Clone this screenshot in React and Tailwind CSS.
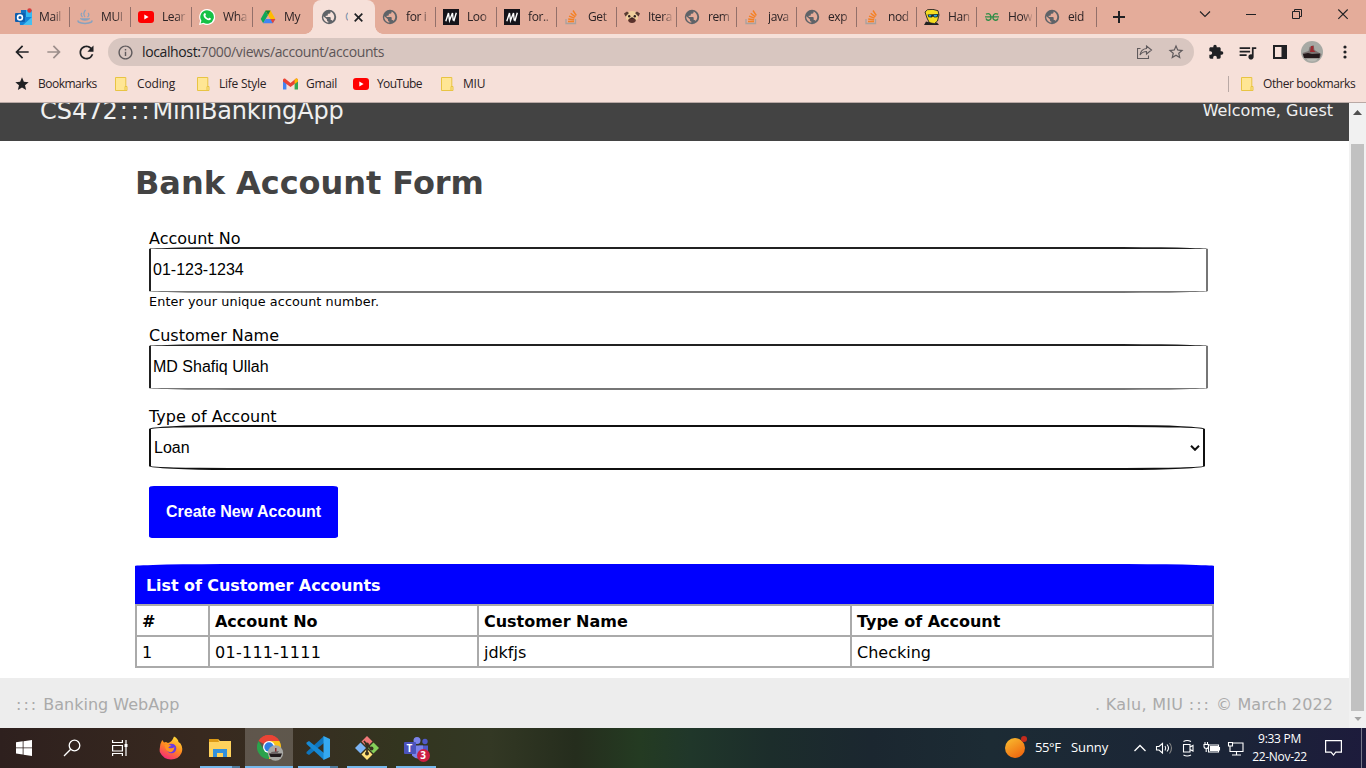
import React from "react";
import { MdExtension, MdQueueMusic, MdStarBorder, MdStar, MdRefresh, MdArrowBack, MdArrowForward, MdInfoOutline } from "react-icons/md";

const Globe = () => (
  <svg viewBox="0 0 16 16" className="mr-px h-4 w-4 shrink-0" fill="#5f6368" fillRule="evenodd">
    <path d="M8 .8a7.200 7.200 0 1 1 0 14.400A7.200 7.200 0 0 1 8 .8zM9.600 2.500v.8q0 1.400-1.400 1.400H6.800V6q0 .8-.8.8H4.700v1.300h4.200q.8 0 .8.800v2h.6q1 0 1.300 1A5.800 5.800 0 0 0 9.600 2.500zM2.300 7.200A5.800 5.800 0 0 0 7.300 13.700v-1.300q-1.400 0-1.400-1.500v-.6z" />
  </svg>
);

const Outlook = () => (
  <svg viewBox="0 0 18 18" className="h-[18px] w-[18px]">
    <rect x="6" y="2" width="11" height="9" fill="#35b8f1" />
    <rect x="6" y="2" width="5" height="8" fill="#1272c4" />
    <path d="M4 9h13v8H5z" fill="#1684d8" />
    <path d="M17 9v8H8z" fill="#44c0f2" />
    <rect x="0" y="5" width="10" height="9" rx="1" fill="#0f5fae" />
    <circle cx="5" cy="9.5" r="2.4" fill="none" stroke="#fff" strokeWidth="1.6" />
    <circle cx="14.5" cy="2.5" r="2.2" fill="#d63c3c" />
  </svg>
);
const Fountain = () => (
  <svg viewBox="0 0 16 16" className="h-4 w-4" fill="none" stroke="#87a2bf">
    <path d="M5.500 8Q3 5.500 5 4M8 8Q5.500 4.500 8.500 1M10.500 8Q13 6 11 4" strokeWidth="1.200" />
    <path d="M3 9.500h10q-1.500 2-5 2t-5-2z" fill="#87a2bf" strokeWidth=".5" />
    <path d="M1.500 11.500q-2 2 6.500 3 8.500-1 6.500-3" strokeWidth="1.600" />
  </svg>
);
const YouTube = () => (
  <svg viewBox="0 0 16 12" className="h-3 w-4">
    <rect width="16" height="12" rx="3" fill="#f00" />
    <path d="M6.300 3.500v5L10.600 6z" fill="#fff" />
  </svg>
);
const WhatsApp = () => (
  <svg viewBox="0 0 16 16" className="h-4 w-4">
    <path d="M8 0a8 8 0 1 1-3.700 15L0 16l1.100-4.200A8 8 0 0 1 8 0z" fill="#fff" />
    <path d="M8 1.200a6.800 6.800 0 1 1-3.500 12.600l-2.900.7.8-2.800A6.800 6.800 0 0 1 8 1.200z" fill="#14c145" />
    <path d="M5.400 4.300c.7-.5 1.100 0 1.500 1.300.2.500-.7.900-.5 1.300.7 1.300 1.500 2 2.800 2.600.5.200.8-1 1.400-.8 1.500.6 1.600.8 1.200 1.600-.9 1.600-3 1.200-4.900-.2C4.800 8.400 3.500 5.900 5.400 4.300z" fill="#fff" />
  </svg>
);
const Drive = () => (
  <svg viewBox="0 0 16 16" className="h-4 w-4">
    <path d="M5.500 1.500 8 6 3.200 14.300 0.700 10z" fill="#0fa857" />
    <path d="M5.500 1.500h5L15.300 10h-5z" fill="#ffbb00" />
    <path d="M5.500 1.500h5L8 6z" fill="#188038" />
    <path d="M5.600 10h9.700l-2.500 4.300H3.200z" fill="#4285f4" />
    <path d="M15.300 10h-5l2.500 4.300z" fill="#ea4335" />
  </svg>
);
const Mdn = () => (
  <svg viewBox="0 0 16 16" className="h-4 w-4">
    <rect width="16" height="16" fill="#15141a" />
    <path d="M2.800 12.300 5.500 4l1 7.500L9.500 4l.7 7.500M13.300 3.700l-2.500 8.600" fill="none" stroke="#fff" strokeWidth="1.400" />
  </svg>
);
const Stack = () => (
  <svg viewBox="0 0 16 16" className="h-4 w-4" fill="none">
    <path d="M2 10v4.500h9.500V10" stroke="#aaa19d" strokeWidth="1.300" />
    <path d="M4 12.500h6M4.200 10l5.900.800M5 7.200l5.500 2M6.700 4.300l4.700 3.600M9 1.500l3.300 5" stroke="#f48024" strokeWidth="1.400" />
  </svg>
);
const Pug = () => (
  <svg viewBox="0 0 16 16" className="h-4 w-4">
    <path d="M2.500 3.500q5.500-3 11 0L14 10q-6 5-12 0z" fill="#f0cf9c" />
    <path d="M0 4.500 3 2.500 5 4 1.500 7.500zM16 4.500 13 2.500 11 4l3.500 3.500z" fill="#5a3d33" />
    <path d="M6 9h4l2 2q-.5 3-4 3t-4-3z" fill="#5a312b" />
    <circle cx="5.200" cy="7.300" r="1.200" fill="#302221" /><circle cx="10.800" cy="7.300" r="1.200" fill="#302221" />
    <path d="M6.500 8.500h3L8 10z" fill="#1e1414" />
  </svg>
);
const Cartoon = () => (
  <svg viewBox="0 0 16 16" className="h-4 w-4">
    <path d="M1 3 3.500.7 9 .4l5 1.300 1 4.300-1.500 6-3 2.500-5-.5L3 9z" fill="#f5dc20" stroke="#222" strokeWidth=".9" />
    <path d="M3.500 5.500 14.800 5l-1.300 3.200-3 .3-1.500-1-1.500 1-3-.3z" fill="#15222b" />
    <path d="M4.500 6l3 .2-.8 1.300H5.200zM9.500 6l4-.3-1 1.800-2 .2z" fill="#25a9e8" />
    <path d="M0 16l2-3.500 4 1 4 1.200 3-1.200 2 2.500z" fill="#222" />
  </svg>
);
const Geeks = () => (
  <svg viewBox="0 0 16 16" className="h-4 w-4" fill="none" stroke="#2f8d46" strokeWidth="1.300">
    <path d="M2 5.200c3.500-1.500 4.800.5 4.800 2.600A2.500 2.500 0 0 1 2 9.500M1 7.800h14M14 5.200c-3.500-1.500-4.800.5-4.800 2.600A2.500 2.500 0 0 0 14 9.500" />
  </svg>
);
const Folder = () => (
  <svg viewBox="0 0 13 15" className="h-[15px] w-[13px] shrink-0" fill="#ffe694" stroke="#e8c443">
    <path d="M.5.5h10.300v13H.5z" />
    <path d="M10 9.500h2v4h-2z" />
  </svg>
);
const Gmail = () => (
  <svg viewBox="0 0 15 12" className="h-3 w-[15px]">
    <path d="M0 2v9.500h3.400V5z" fill="#4285f4" />
    <path d="M15 2v9.500h-3.400V5z" fill="#34a853" />
    <path d="M0 2q0-2 2-1.500L7.500 5 13 .5q2-.5 2 1.500v1.500L7.500 9 0 3.500z" fill="#ea4335" />
    <path d="M11.600 1.800 13 .6q2-.5 2 1.400v1.600l-3.400 2.500z" fill="#fbbc04" />
  </svg>
);

const tabs = [
  { icon: Outlook, label: "Mail", w: "w-[70px] pl-[15px]" },
  { icon: Fountain, label: "MUI", w: "w-[61px] pl-[7px]" },
  { icon: YouTube, label: "Lear", w: "w-[61px] pl-[7px]" },
  { icon: WhatsApp, label: "Wha", w: "w-[61px] pl-[7px]" },
  { icon: Drive, label: "My", w: "w-[60px] pl-[7px]", bare: true },
  { active: true },
  { icon: Globe, label: "for i", w: "w-[61px] pl-[7px]" },
  { icon: Mdn, label: "Loo", w: "w-[61px] pl-[7px]" },
  { icon: Mdn, label: "for..", w: "w-[60px] pl-[7px]" },
  { icon: Stack, label: "Get", w: "w-[60px] pl-[7px]" },
  { icon: Pug, label: "Itera", w: "w-[60px] pl-[7px]" },
  { icon: Globe, label: "rem", w: "w-[60px] pl-[7px]" },
  { icon: Stack, label: "java", w: "w-[60px] pl-[7px]" },
  { icon: Globe, label: "exp", w: "w-[60px] pl-[7px]" },
  { icon: Stack, label: "nod", w: "w-[60px] pl-[7px]" },
  { icon: Cartoon, label: "Han", w: "w-[60px] pl-[7px]" },
  { icon: Geeks, label: "How", w: "w-[60px] pl-[7px]" },
  { icon: Globe, label: "eid", w: "w-[60px] pl-[7px]" },
];

function Tab({ icon: Icon, label, w, bare, active }) {
  if (active)
    return (
      <div className="relative flex h-full w-[62px] items-center rounded-t-lg bg-[#f6e0d9] pl-2">
        <span className="absolute bottom-0 -left-2 h-2 w-2 bg-[radial-gradient(circle_at_0_0,transparent_7.5px,#f6e0d9_8px)]" />
        <span className="absolute -right-2 bottom-0 h-2 w-2 bg-[radial-gradient(circle_at_100%_0,transparent_7.5px,#f6e0d9_8px)]" />
        <Globe />
        <span className="ml-[7px] w-[3px] overflow-hidden text-[#7b92ad]">C</span>
        <svg viewBox="0 0 9 9" className="ml-[6px] h-[9px] w-[9px]" stroke="#202124" strokeWidth="1.700"><path d="M.7.7l7.600 7.600M8.300.7.7 8.300" /></svg>
      </div>
    );
  return (
    <div className={`flex h-full shrink-0 items-center ${w}`}>
      <span className="flex w-6 shrink-0 items-center"><Icon /></span>
      <span className="w-[24px] overflow-hidden tracking-[-0.4px] whitespace-nowrap [mask-image:linear-gradient(to_right,#000_60%,rgba(0,0,0,0.15))]">{label}</span>
      {!bare && <span className="ml-auto h-5 w-px bg-[#93706a]" />}
    </div>
  );
}

function Browser() {
  return (
    <div className="text-[12px] text-[#2b2224] [font-family:'Open_Sans','Noto_Sans',sans-serif]">
      <div className="flex h-[34px] bg-[#e4ac9a]">
        {tabs.map((t, i) => <Tab key={i} {...t} />)}
        <svg viewBox="0 0 269 34" className="h-[34px] w-[269px]" fill="none" stroke="#202124">
          <path d="M22 11v12M16 17h12" strokeWidth="2" />
          <path d="M103 11.500l5 5 5-5" strokeWidth="1.100" />
          <path d="M149 14.500h10" />
          <path d="M195.500 11.500h7v7h-7zM197.500 11.500v-2h7v7h-2" />
          <path d="M241.300 9.500l9.400 9.400M250.700 9.500l-9.400 9.400" strokeWidth="1.100" />
        </svg>
      </div>
      <div className="flex h-[36px] items-center bg-[#f6e0d9] pl-3">
        <MdArrowBack className="h-5 w-5 text-[#202124]" />
        <MdArrowForward className="ml-3 h-5 w-5 text-[#9c8e8b]" />
        <MdRefresh className="ml-3 h-[21px] w-[21px] text-[#202124]" />
        <div className="ml-[11px] flex h-7 w-[1086px] items-center rounded-full bg-[#d8c6c0] pl-[9px] text-[14px] text-[#5d5557]">
          <MdInfoOutline className="h-[17px] w-[17px] text-[#5f5a5c]" />
          <span className="ml-2 pb-px tracking-[-0.375px]"><span className="text-[#202124]">localhost:</span>7000/views/account/accounts</span>
          <svg viewBox="0 0 16 14" className="ml-auto h-[14px] w-4" fill="none" stroke="#5f5a5c" strokeWidth="1.100">
            <path d="M3.500 3.500h-3v10h11v-3" /><path d="M9.500 1l5 4-5 4V6.500Q5.500 6.500 3 10 4 4 9.500 3.500z" />
          </svg>
          <MdStarBorder className="mr-[9px] ml-[14px] h-[18px] w-[18px] text-[#5f5a5c]" />
        </div>
        <MdExtension className="ml-[14px] h-4 w-4 text-[#202124]" />
        <MdQueueMusic className="ml-[13px] h-[21px] w-[21px] text-[#202124]" />
        <svg viewBox="0 0 14 14" className="ml-[15px] h-[14px] w-[14px]"><path d="M0 0h14v14H0zM2 2v10h6.500V2z" fill="#202124" fillRule="evenodd" /></svg>
        <svg viewBox="0 0 22 22" className="ml-[14px] h-[22px] w-[22px]">
          <circle cx="11" cy="11" r="11" fill="#a7a9a4" />
          <path d="M1.500 12l6-2 1-4 4-2 1 5 5 3 2 1q-1 5-5 6H6q-4-2-4.500-7z" fill="#7b7271" />
          <path d="M10 5h2.500v4l2 2H9z" fill="#9c2b30" />
          <path d="M2 13l5-1 4 1 8-.5-.5 4.500H3z" fill="#25191b" />
          <path d="M4 17.500h14q-7 6-14 0z" fill="#b9bab4" />
        </svg>
        <svg viewBox="0 0 4 14" className="ml-5 h-[14px] w-1" fill="#202124"><circle cx="2" cy="2" r="1.600" /><circle cx="2" cy="7" r="1.600" /><circle cx="2" cy="12" r="1.600" /></svg>
      </div>
      <div className="flex h-[33px] items-center border-b border-[#b9a9a5] bg-[#f6e0d9] pb-1 pl-[14px]">
        <MdStar className="h-4 w-4 text-[#202124]" />
        <span className="ml-2 w-[77px] tracking-[-0.5px]">Bookmarks</span>
        <Folder /><span className="ml-[9px] w-[60px] tracking-[-0.15px]">Coding</span>
        <Folder /><span className="ml-[9px] w-16 tracking-[-0.25px] whitespace-nowrap">Life Style</span>
        <Gmail /><span className="ml-2 w-[47px] tracking-[-0.3px]">Gmail</span>
        <YouTube /><span className="ml-2 w-16 tracking-[-0.65px]">YouTube</span>
        <Folder /><span className="ml-[9px] tracking-[-0.2px]">MIU</span>
        <span className="ml-auto h-4 w-px bg-[#b9a9a5]" />
        <span className="ml-3"><Folder /></span>
        <span className="mr-[10px] ml-[9px] w-[93px] tracking-[-0.42px] whitespace-nowrap">Other bookmarks</span>
      </div>
    </div>
  );
}

const rows = [
  ["#", "Account No", "Customer Name", "Type of Account"],
  ["1", "01-111-1111", "jdkfjs", "Checking"],
];
const inputStyle =
  "flex h-[46px] w-[1059px] items-center rounded-[106px/2px] border-2 border-t-[#212121] border-r-[#767676] border-b-[#767676] border-l-[#212121] pl-[2px] [font-family:'Liberation_Sans',sans-serif]";

function Page() {
  return (
    <div className="flex h-[625px] bg-white text-[16px] text-black [font-family:'DejaVu_Sans',sans-serif]">
      <div className="flex w-[1349px] flex-col">
        <header className="flex h-[38px] justify-between overflow-hidden bg-[#434343] pr-4 pl-10 text-[#f0f0f0]">
          <span className="-mt-[6px] text-[24px] leading-[28px]">CS472<span className="ml-[2px] tracking-[2.800px]">:::</span><span className="tracking-[-0.180px]">MiniBankingApp</span></span>
          <span className="-mt-[2px] leading-[19px]">Welcome, Guest</span>
        </header>
        <main className="flex h-[537px] w-[1214px] flex-col pl-[135px]">
          <h1 className="h-[88px] text-[32px] leading-[84px] font-bold tracking-[-0.040px] text-[#434343]">Bank Account Form</h1>
          <div className="flex flex-col pl-[14px]">
            <label className="h-[18px] leading-[19px]">Account No</label>
            <div className={inputStyle}>01-123-1234</div>
            <small className="h-[33px] text-[12.800px] leading-[18px] tracking-[0.090px]">Enter your unique account number.</small>
            <label className="h-[18px] leading-[19px]">Customer Name</label>
            <div className={inputStyle}>MD Shafiq Ullah</div>
            <label className="mt-[17px] h-[18px] leading-[19px] tracking-[0.050px]">Type of Account</label>
            <div className="flex h-[45px] w-[1056px] items-center justify-between rounded-[80px/4px] border-2 border-[#101010] pr-[3px] pl-[3px] [font-family:'Liberation_Sans',sans-serif]">
              Loan
              <svg viewBox="0 0 10 6" className="h-[6px] w-[10px]" fill="none" stroke="#101010" strokeWidth="2"><path d="M1 .8l4 4 4-4" /></svg>
            </div>
            <div className="mt-4 flex h-[52px] w-[189px] items-center justify-center rounded-[5px/2px] bg-[#0000ff] font-bold text-white [font-family:'Liberation_Sans',sans-serif]">Create New Account</div>
          </div>
          <div className="mt-[26px] h-10 rounded-tl-[108px_2px] rounded-tr-[108px_2px] bg-[#0000ff] pl-[11px] leading-[44px] font-bold tracking-[-0.080px] text-white">List of Customer Accounts</div>
          <div className="grid grid-cols-[71px_267px_371px_360px] gap-[2px] border-2 border-[#aaa] bg-[#aaa]">
            {rows.map((r, i) => r.map((c) => (
              <span key={c} className={`h-[29px] bg-white pl-[5px] leading-[32px] ${i ? (c.includes("-") ? "tracking-[0.270px]" : "") : "font-bold tracking-[-0.020px]"}`}>{c}</span>
            )))}
          </div>
        </main>
        <footer className="flex h-[50px] justify-between bg-[#ededed] px-4 leading-[54px] text-[#aaa]">
          <span><span className="tracking-[2px]">:::</span> Banking WebApp</span>
          <span><span className="tracking-[0.300px]">. Kalu, MIU </span><span className="tracking-[2px]">:::</span><span className="tracking-[0.100px]"> © March 2022</span></span>
        </footer>
      </div>
      <div className="flex w-[17px] flex-col items-center bg-[#f1f1f1]">
        <svg viewBox="0 0 9 5" className="mt-[7px] h-[5px] w-[9px]" fill="#505050"><path d="M0 5l4.500-5L9 5z" /></svg>
        <div className="mt-[29px] h-[567px] w-[13px] bg-[#c1c1c1]" />
        <svg viewBox="0 0 9 5" className="mt-[6px] h-[4px] w-[8px]" fill="#a3a3a3"><path d="M0 0l4.500 5L9 0z" /></svg>
      </div>
    </div>
  );
}

const ic = "h-6 w-6";
const Windows = () => <svg viewBox="0 0 16 16" className="h-4 w-4" fill="#fff"><path d="M0 2.300 6.700 1.300v6.200H0zM7.500 1.200 16 0v7.500H7.500zM0 8.300h6.700v6.200L0 13.600zM7.500 8.300H16V16l-8.500-1.200z" /></svg>;
const Search = () => <svg viewBox="0 0 18 18" className="h-[18px] w-[18px]" fill="none" stroke="#fff" strokeWidth="1.300"><circle cx="11.500" cy="6.500" r="5.300" /><path d="M7.700 10.300 1 17" /></svg>;
const TaskView = () => <svg viewBox="0 0 16 16" className="h-4 w-4" fill="none" stroke="#fff" strokeWidth="1.200"><path d="M.6 0v2.500h9.800V0M.6 5.500h9.800v5.500H.6zM.6 16v-2.500h9.800V16M14 0v16" /><path d="M12.500 4h3v3h-3z" fill="#fff" stroke="none" /></svg>;
const Firefox = () => (
  <svg viewBox="0 0 24 24" className={ic}>
    <defs><linearGradient id="ff" x1=".8" y1="0" x2=".3" y2="1"><stop offset="0" stopColor="#ffe13c" /><stop offset=".5" stopColor="#ff8a1e" /><stop offset="1" stopColor="#f5277b" /></linearGradient></defs>
    <path d="M15 .5q4 2 4.500 5.500l2 1.500Q24.500 12 22.500 17q-3 6.500-10.500 6.500T.8 16Q0 9 3.200 4L5 6.500 7 6l2 1q4-1 6-6.500z" fill="url(#ff)" />
    <circle cx="12.500" cy="12.500" r="4.800" fill="#6b3ce0" />
    <path d="M5.500 9q4-2 7 1-3 0-3 2 4 1 6-1-1 6-5 5-4-1-5-7z" fill="#ff9420" />
  </svg>
);
const Explorer = () => (
  <svg viewBox="0 0 22 18" className="h-[18px] w-[22px]">
    <path d="M0 0h9l2 2h11v16H0z" fill="#ffd25c" /><path d="M0 0h9l1 3H0z" fill="#dd9a14" />
    <path d="M4 10h14v8h-4v-4H8v4H4z" fill="#3391dc" />
  </svg>
);
const Chrome = () => (
  <svg viewBox="0 0 27 26" className="ml-[2px] h-[26px] w-[27px]">
    <path d="M12 12 1.600 6A12 12 0 0 1 22.400 6z" fill="#e94435" />
    <path d="M12 12V6h10.400A12 12 0 0 1 12 24z" fill="#fbc116" />
    <path d="M12 12v12A12 12 0 0 1 1.600 6L7 15z" fill="#2ba24c" />
    <path d="M1.600 6A12 12 0 0 1 22.400 6H12z" fill="#e94435" />
    <circle cx="12" cy="12" r="6" fill="#fff" /><circle cx="12" cy="12" r="4.700" fill="#2f7de1" />
    <circle cx="18.500" cy="18" r="7.700" fill="#a8a8a4" />
    <path d="M12 18.500h13l-1.500 3.500h-10z" fill="#211a1c" /><path d="M18 13h1.500v5H18z" fill="#8d2e31" /><path d="M14 17l8-1-2 3h-5z" fill="#6b6263" />
  </svg>
);
const Code = () => (
  <svg viewBox="0 0 24 24" className={ic}>
    <path d="M18 0v7L3 19 .5 17.500V16z" fill="#0f75bd" /><path d="M18 24v-7L3 5 .5 6.500V8z" fill="#1789d4" />
    <path d="M17.500 0 24 3v18l-6.500 3z" fill="#35a9f0" />
  </svg>
);
const Git = () => (
  <svg viewBox="0 0 24 24" className={ic}>
    <path d="M12 0l5.500 5.500L12 11 6.500 5.500z" fill="#f07878" /><path d="M5.500 6.500 11 12l-5.500 5.500L0 12z" fill="#7cb4f4" />
    <path d="M18.500 6.500 24 12l-5.500 5.500L13 12z" fill="#85cf5a" /><path d="M12 13l5.500 5.500L12 24l-5.500-5.500z" fill="#ffe27a" />
    <path d="M9 5l3 4v9M12 9l4 3.500" fill="none" stroke="#37301f" strokeWidth="1.700" />
    <circle cx="12" cy="8.500" r="2" fill="#37301f" /><circle cx="12" cy="17.500" r="2" fill="#37301f" /><circle cx="16.500" cy="12.500" r="2" fill="#37301f" />
  </svg>
);
const Teams = () => (
  <div className="relative mt-[2px] ml-[1px] h-6 w-[26px]">
    <svg viewBox="0 0 26 24" className="h-6 w-[26px]">
      <circle cx="13" cy="3.500" r="3.500" fill="#7b83eb" /><circle cx="21" cy="4.500" r="2.700" fill="#5059c9" />
      <path d="M15 8.500h9v7q-3 4-7 2z" fill="#5059c9" /><path d="M8 8.500h11v10q-5 6-11 0z" fill="#7b83eb" />
      <rect x="0" y="5" width="12" height="12" rx="1" fill="#4b53bc" />
    </svg>
    <span className="absolute top-[5px] left-0 w-3 text-center text-[10px] leading-3 font-bold text-white">T</span>
    <span className="absolute top-[12px] left-[13px] h-[13px] w-[13px] rounded-full bg-[#cc1e43] text-center text-[10px] leading-[13px] font-bold text-white">3</span>
  </div>
);

const apps = [
  { icon: Windows, w: "w-12" }, { icon: Search, w: "w-12" }, { icon: TaskView, w: "w-12 mr-[3px]" }, { icon: Firefox, w: "w-12 mr-px" },
  { icon: Explorer, bar: "split", w: "w-12 mr-px" }, { icon: Chrome, bar: "full", w: "w-12 mr-px bg-white/20" },
  { icon: Code, bar: "split", w: "w-12 mr-px" }, { icon: Git, bar: "one", w: "w-12 mr-px" }, { icon: Teams, bar: "one", w: "w-12" },
];

function Taskbar() {
  return (
    <div className="flex h-10 bg-[linear-gradient(to_right,#2e201e,#38291f_200px,#363021_330px,#33351f_400px,#333824_490px,#252d1d_575px,#243b22_640px,#20372a_690px,#1c2d2b_770px,#1b2730_870px,#1c2b34_990px,#1b2437_1230px,#1d1b3c)] text-[12px] text-white [font-family:'Open_Sans','Noto_Sans',sans-serif]">
      {apps.map(({ icon: Icon, bar, w }, i) => (
        <div key={i} className={`flex h-10 flex-col items-center ${w}`}>
          <div className="flex h-[38px] items-center justify-center pt-[2px]"><Icon /></div>
          {bar && (
            <div className={`flex h-[2px] ${bar === "full" ? "w-full" : "w-10"}`}>
              <span className="flex-1 bg-[#76b9ed]" />
              {bar === "split" && <span className="w-2 bg-[#4f7b9d]" />}
            </div>
          )}
        </div>
      ))}
      <div className="ml-auto flex w-[361px] items-center">
        <svg viewBox="0 0 22 24" className="mb-[2px] h-6 w-[22px]">
          <defs><linearGradient id="sun" x1="0" y1="0" x2=".6" y2="1"><stop offset="0" stopColor="#f8c031" /><stop offset="1" stopColor="#f06a10" /></linearGradient></defs>
          <circle cx="10" cy="13" r="10" fill="url(#sun)" /><circle cx="19" cy="4" r="3" fill="#c42b1c" />
        </svg>
        <span className="ml-2 w-9 text-[13px] tracking-[-0.4px] whitespace-nowrap">55°F</span>
        <span className="w-[63px] text-[13px] tracking-[-0.1px]">Sunny</span>
        <svg viewBox="0 0 112 20" className="h-5 w-[112px]" fill="none" stroke="#fff" strokeWidth="1.100">
          <path d="M.5 13 6 7.500l5.500 5.500" strokeWidth="1.300" />
          <path d="M22.500 8.500h2.500l3.500-3v9.500l-3.500-3h-2.500zM31 8q1.500 2 0 4.500M33 6.500q3 3.500 0 7" /><path d="M35.500 5q4 5 0 10.500" stroke="#888" />
          <path d="M49.500 6.500h6.500v7.500h-6.500zM56 9l3-1.500v5.500l-3-1.500M49.500 3.500Q53 1.500 57 3.500M49.500 17q3.500 2 7.500 0" />
          <path d="M74.500 7h10v7h-10z" /><path d="M76.500 8.500h7v4h-7z" fill="#fff" /><path d="M70 6.500h4.500v2q0 2-2.200 2T70 8.500zM71 4v2.500M73.500 4v2.500M72.200 10.500V14M85.500 9v3.500" />
          <path d="M98 5h11v8.500H96V8M102.500 13.500v3.500M98 17h9" /><path d="M94.500 4.500h4v3.500h-4z" />
        </svg>
        <div className="flex w-[66px] flex-col items-center pl-px text-[12px] leading-[18px] tracking-[-0.3px] whitespace-nowrap">
          <span>9:33 PM</span><span>22-Nov-22</span>
        </div>
        <svg viewBox="0 0 17 16" className="ml-[13px] h-4 w-[17px]" fill="none" stroke="#fff" strokeWidth="1.200"><path d="M.6.6h15.800v11.500h-5.700L8.500 15l-2.500-2.900H.6z" /></svg>
        <span className="ml-auto h-10 w-px bg-[#777788]" /><span className="w-1" />
      </div>
    </div>
  );
}

export default function App() {
  return (
    <div className="h-[768px] w-[1366px] overflow-hidden">
      <Browser />
      <Page />
      <Taskbar />
    </div>
  );
}
